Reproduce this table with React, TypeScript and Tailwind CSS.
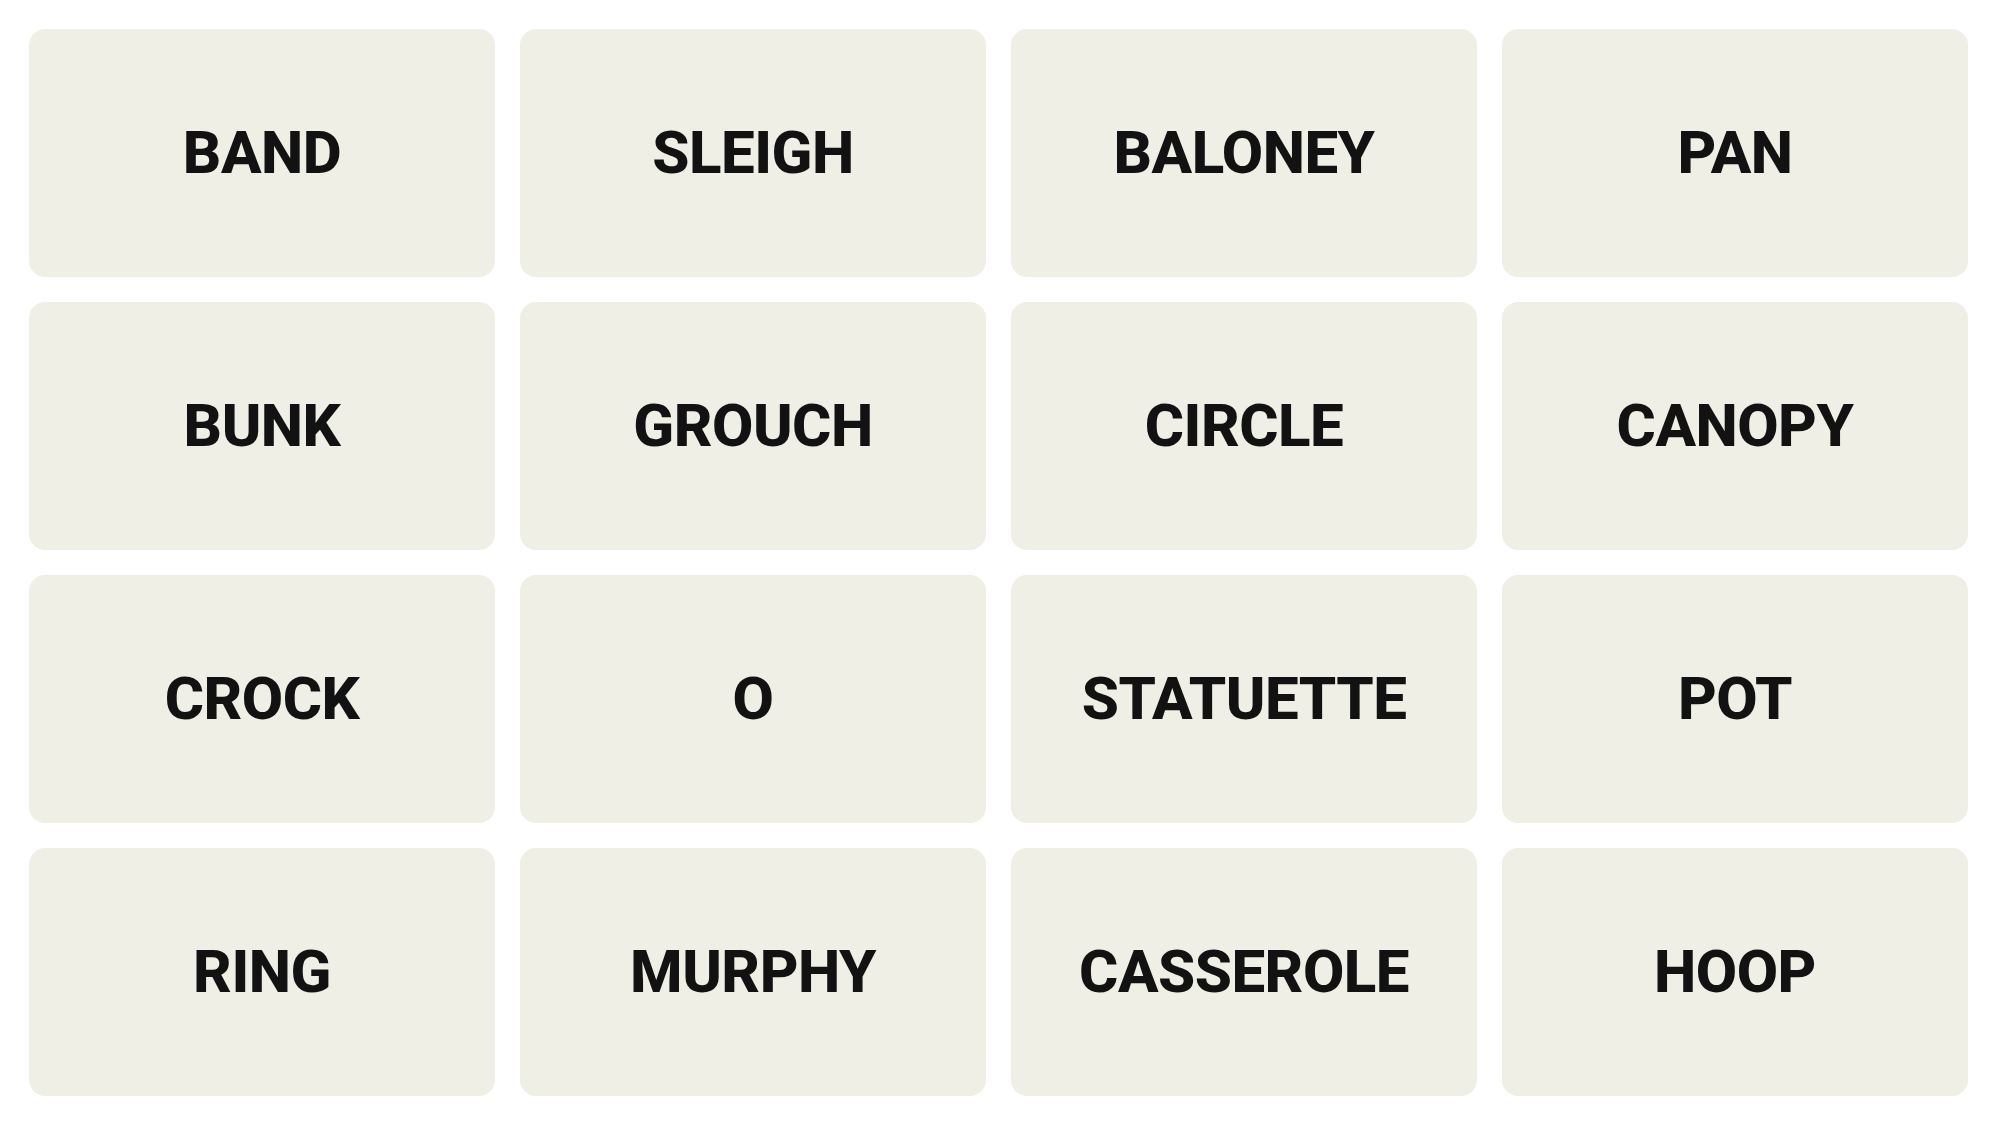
const words = [
  'BAND', 'SLEIGH', 'BALONEY', 'PAN',
  'BUNK', 'GROUCH', 'CIRCLE', 'CANOPY',
  'CROCK', 'O', 'STATUETTE', 'POT',
  'RING', 'MURPHY', 'CASSEROLE', 'HOOP',
]

export default function App() {
  return (
    <div className="min-h-screen bg-white pl-[29px] pr-[32px] pt-[29px]">
      <div className="grid grid-cols-[repeat(4,466px)] auto-rows-[248px] gap-x-[25px] gap-y-[25px]">
        {words.map(word => (
          <div
            key={word}
            className="flex items-center justify-center rounded-[16px] bg-[#efefe6] text-[#121212] text-[60px] font-extrabold tracking-[-0.5px]"
            style={{ fontFamily: 'Roboto, "Liberation Sans", sans-serif' }}
          >
            {word}
          </div>
        ))}
      </div>
    </div>
  )
}
